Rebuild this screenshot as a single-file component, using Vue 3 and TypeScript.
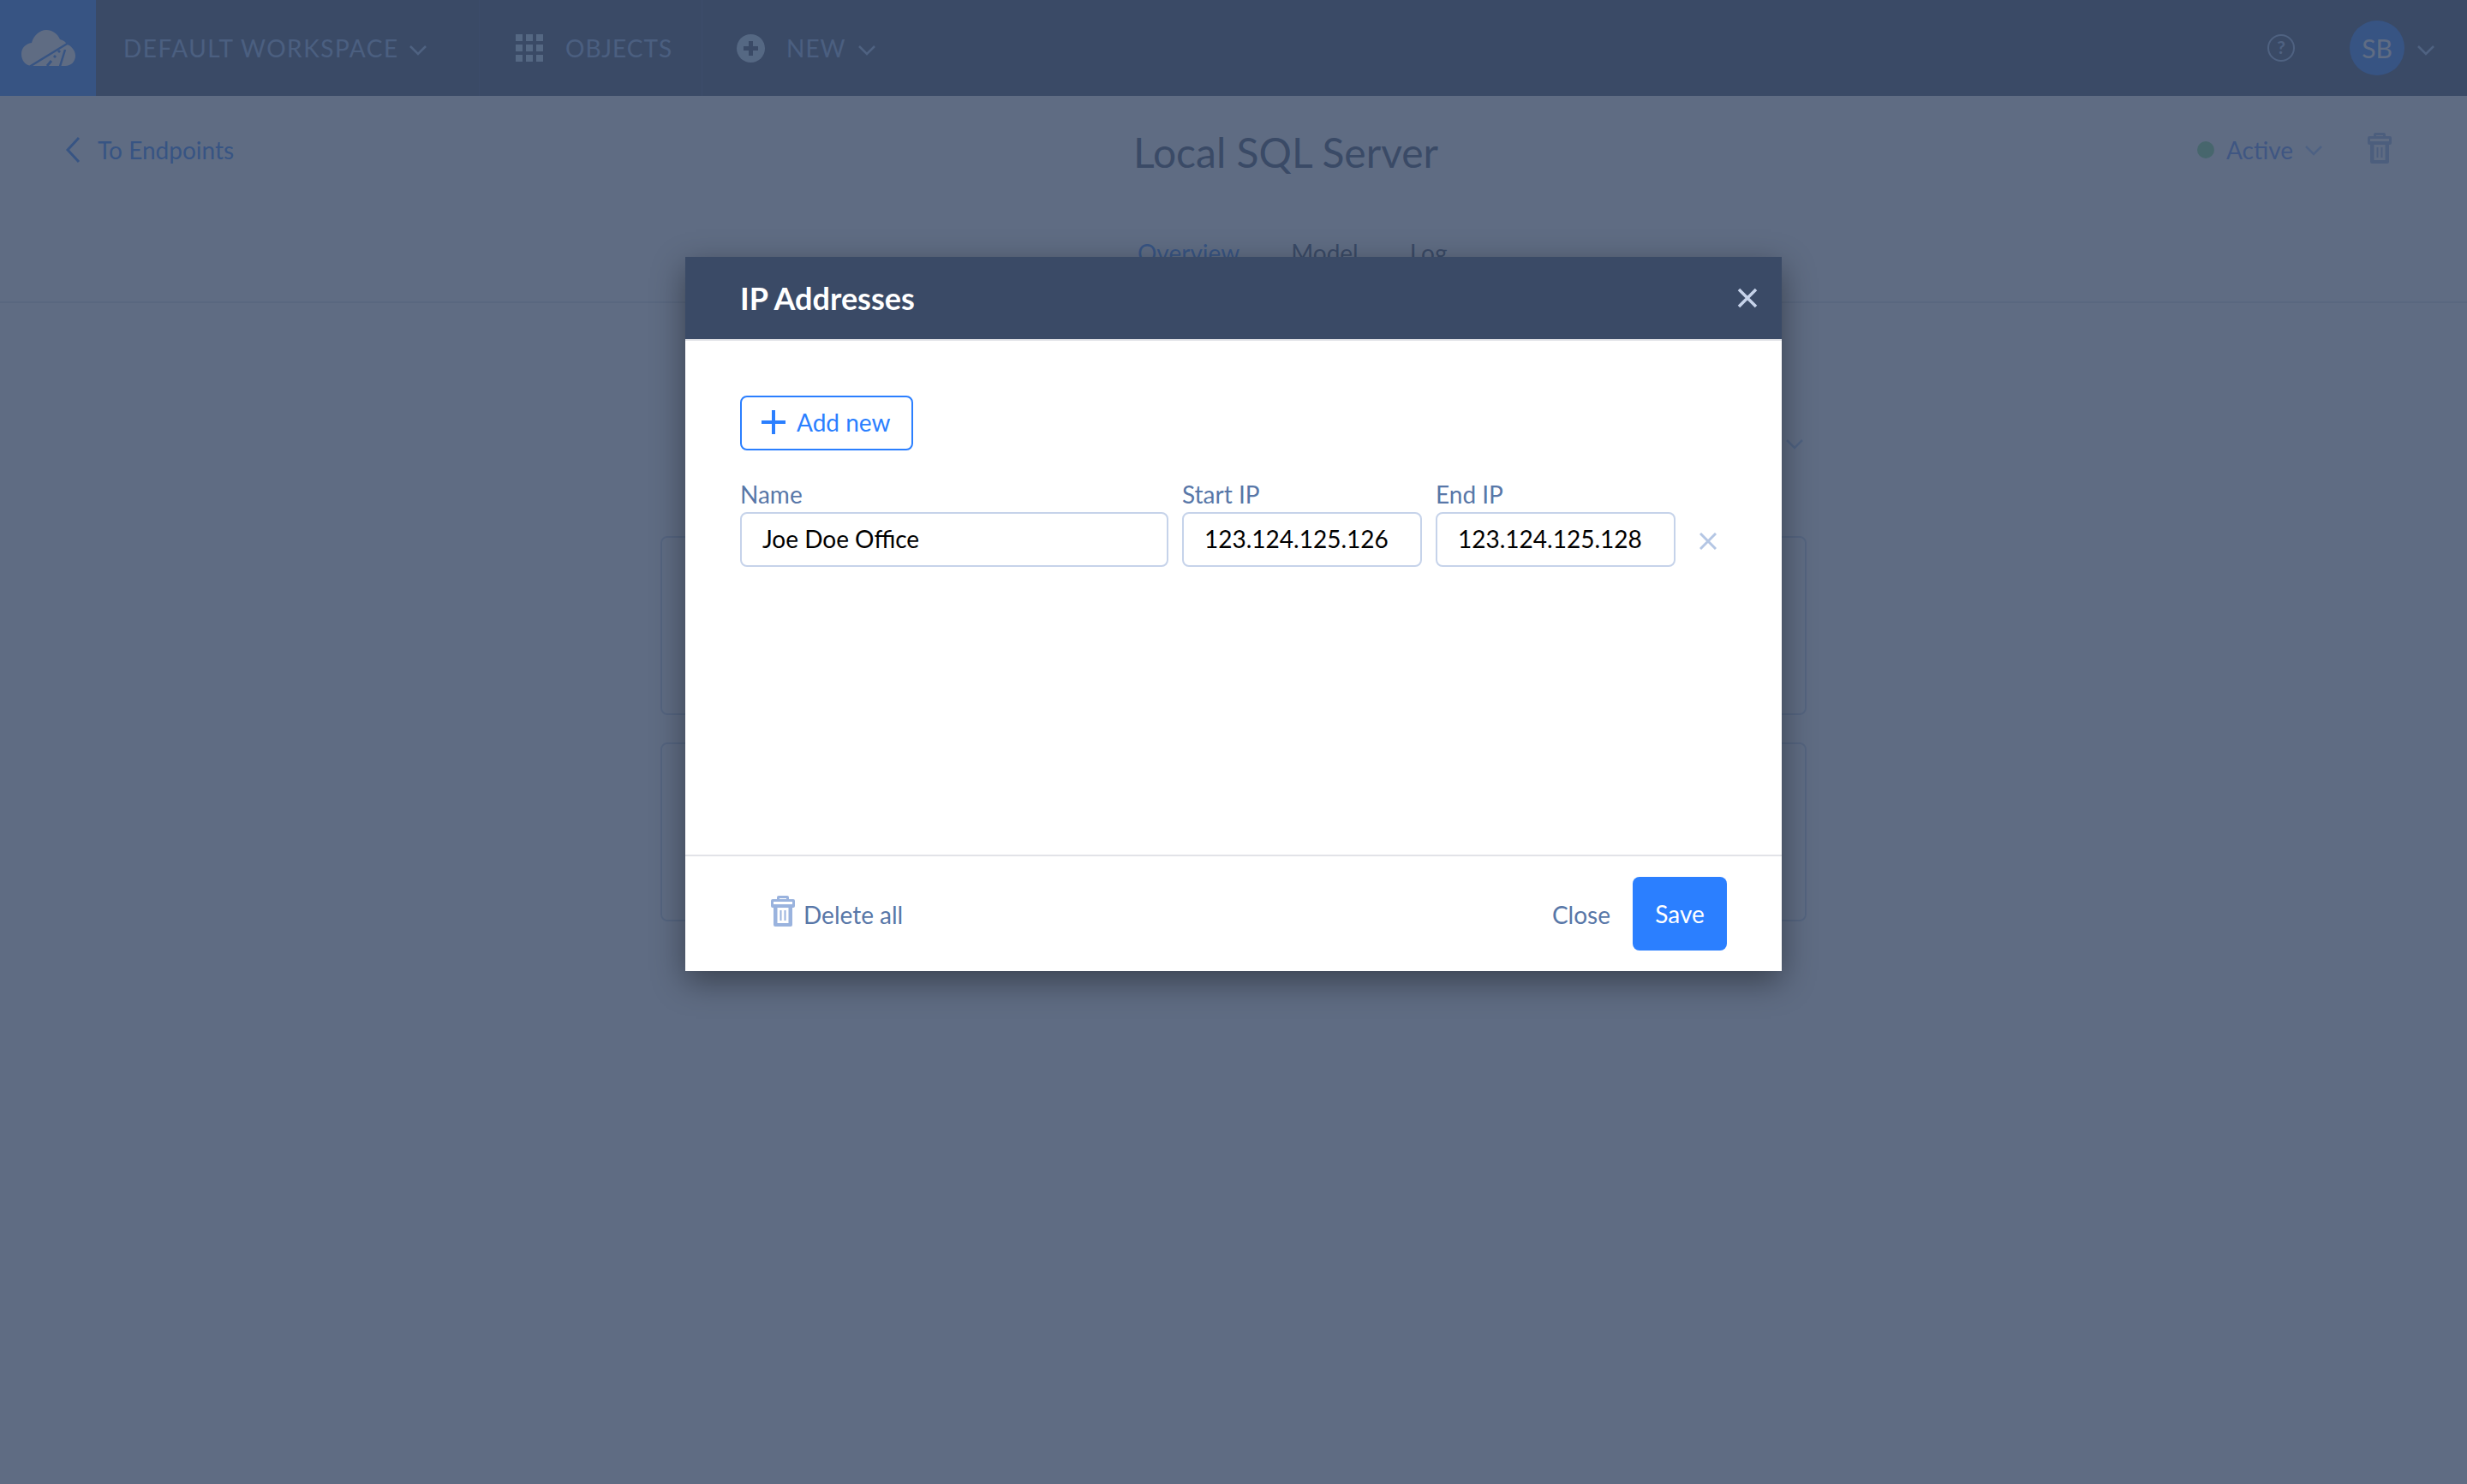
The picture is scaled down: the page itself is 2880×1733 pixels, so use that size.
<template>
  <div class="page">
    <header class="nav">
      <div class="logo">
        <svg width="64" height="42" viewBox="0 0 64 42">
          <path fill="#fff" d="M14 42C6 42 1 36 1 28C1 21 6 16 13 15C15 7 22 0 30 0C37 0 43 4 46 11C50 12 53 14 54 17C59 18 64 24 64 30C64 37 59 42 52 42Z" />
          <path stroke="#2b7fff" stroke-width="2.500" fill="none" d="M11 42.500L56 15M46 42.500L52 23" />
          <path stroke="#2b7fff" stroke-width="3" fill="none" d="M31 42L36 36M39 32L41 30M44 26L46 24" />
        </svg>
      </div>
      <div class="nav-item workspace">
        <span>Default Workspace</span>
        <svg class="chev" width="20" height="13" viewBox="0 0 20 13"><path d="M1 2l9 9 9-9" /></svg>
      </div>
      <div class="nav-item objects">
        <svg width="32" height="32" viewBox="0 0 32 32" class="grid-icon">
          <rect v-for="c in gridCells" :key="c.id" :x="c.x" :y="c.y" width="8" height="8" />
        </svg>
        <span>Objects</span>
      </div>
      <div class="nav-item create">
        <svg width="33" height="33" viewBox="0 0 33 33">
          <circle cx="16.500" cy="16.500" r="16.500" fill="#c9e6ff" />
          <path d="M16.500 8v17M8 16.500h17" stroke="#3a4a66" stroke-width="5" />
        </svg>
        <span>New</span>
        <svg class="chev" width="20" height="13" viewBox="0 0 20 13"><path d="M1 2l9 9 9-9" /></svg>
      </div>
      <div class="nav-right">
        <svg width="32" height="32" viewBox="0 0 32 32" class="help">
          <circle cx="16" cy="16" r="15" fill="none" stroke="#a8c8f5" stroke-width="2" />
          <text x="16" y="23" text-anchor="middle" font-size="21" font-weight="700" fill="#a8c8f5">?</text>
        </svg>
        <div class="avatar">SB</div>
        <svg class="chev" width="20" height="13" viewBox="0 0 20 13"><path d="M1 2l9 9 9-9" /></svg>
      </div>
    </header>

    <section class="subhead">
      <a class="back">
        <svg width="20" height="32" viewBox="0 0 20 32"><path d="M17 2L4 16l13 14" /></svg>
        To Endpoints
      </a>
      <h1 class="title">Local SQL Server</h1>
      <div class="status">
        <i class="dot"></i>
        <span>Active</span>
        <svg class="chev" width="20" height="13" viewBox="0 0 20 13"><path d="M1 2l9 9 9-9" /></svg>
        <svg class="trash-bg" width="28" height="36" viewBox="0 0 28 36">
          <use href="#trash" />
        </svg>
      </div>
    </section>

    <nav class="tabs">
      <span class="tab active">Overview</span>
      <span class="tab">Model</span>
      <span class="tab">Log</span>
    </nav>

    <main class="content">
      <svg class="chev content-chev" width="20" height="13" viewBox="0 0 20 13"><path d="M1 2l9 9 9-9" /></svg>
      <div class="card"></div>
      <div class="card"></div>
    </main>

    <div class="overlay">
      <div class="modal">
        <div class="modal-head">
          <h2>IP Addresses</h2>
          <svg class="close" width="24" height="24" viewBox="0 0 24 24"><path d="M2 2l20 20M22 2L2 22" /></svg>
        </div>

        <div class="modal-body">
          <button class="add-btn">
            <svg width="30" height="30" viewBox="0 0 30 30"><path d="M15 1v28M1 15h28" /></svg>
            Add new
          </button>
          <div v-for="row in rows" :key="row.name" class="ip-row">
            <label class="field name-field">
              <span>Name</span>
              <input :value="row.name" />
            </label>
            <label class="field ip-field">
              <span>Start IP</span>
              <input :value="row.start" />
            </label>
            <label class="field ip-field">
              <span>End IP</span>
              <input :value="row.end" />
            </label>
            <svg class="row-remove" width="20" height="20" viewBox="0 0 20 20"><path d="M1 1l18 18M19 1L1 19" /></svg>
          </div>
        </div>

        <div class="modal-foot">
          <a class="delete-all">
            <svg width="28" height="36" viewBox="0 0 28 36">
              <g id="trash">
                <path fill="#9ab3de" fill-rule="evenodd" d="M9 0h10a2 2 0 0 1 2 2v2h5a2 2 0 0 1 2 2v6a2 2 0 0 1-2 2h-1v20a2 2 0 0 1-2 2H5a2 2 0 0 1-2-2V14H2a2 2 0 0 1-2-2V6a2 2 0 0 1 2-2h5V2a2 2 0 0 1 2-2zM10 3v1h8V3zM3 7v3h22V7zM7.500 14v18h13V14zM10.500 17h2v12h-2zM15.500 17h2v12h-2z" />
              </g>
            </svg>
            Delete all
          </a>
          <a class="close-link">Close</a>
          <button class="save-btn">Save</button>
        </div>
      </div>
    </div>
  </div>
</template>

<script setup lang="ts">
const gridCells = [0, 1, 2].flatMap((r) =>
  [0, 1, 2].map((c) => ({ id: `${r}-${c}`, x: c * 12, y: r * 12 }))
)

const rows = [
  { name: 'Joe Doe Office', start: '123.124.125.126', end: '123.124.125.128' }
]
</script>

<style>
html,
body {
  margin: 0;
  background: #fff;
}
</style>

<style scoped>
.page {
  position: relative;
  min-height: 1733px;
  font-family: Lato, "Liberation Sans", sans-serif;
  font-size: 28px;
  color: #3a4a66;
  overflow: hidden;
}

.nav {
  display: flex;
  align-items: center;
  height: 112px;
  background: #3a4a66;
  color: #93b8ed;
}

.logo {
  display: flex;
  align-items: center;
  justify-content: center;
  width: 112px;
  height: 112px;
  background: #2b7fff;
}

.nav-item {
  display: flex;
  align-items: center;
  height: 100%;
  box-sizing: border-box;
  text-transform: uppercase;
  letter-spacing: 1.500px;
  border-right: 1px solid #46587a;
}

.workspace {
  width: 448px;
  padding-left: 32px;
  gap: 12px;
}

.objects {
  width: 260px;
  padding-left: 42px;
  gap: 26px;
  letter-spacing: 1px;
}

.create {
  padding-left: 40px;
  gap: 25px;
  border-right: 0;
  letter-spacing: 1px;
}

.create .chev {
  margin-left: -11px;
}

.grid-icon {
  fill: #c9e6ff;
}

.chev {
  fill: none;
  stroke: #a8c8f5;
  stroke-width: 2.500;
  flex: none;
}

.nav .chev {
  margin-top: 4px;
}

.nav-right {
  display: flex;
  align-items: center;
  margin-left: auto;
  padding-right: 38px;
}

.help text {
  font-family: Lato, sans-serif;
}

.avatar {
  width: 64px;
  height: 64px;
  margin-left: 64px;
  margin-right: 15px;
  border-radius: 50%;
  background: #2b7fff;
  color: #fff;
  font-size: 30px;
  line-height: 64px;
  text-align: center;
}

.subhead {
  display: grid;
  grid-template-columns: 1323px 1fr auto;
  align-items: center;
  height: 128px;
}

.back {
  display: flex;
  align-items: center;
  gap: 19px;
  padding-left: 75px;
  margin-top: -2px;
  color: #2b7fff;
}

.back svg {
  fill: none;
  stroke: #2b7fff;
  stroke-width: 3;
}

.title {
  margin: 4px 0 0;
  font-size: 48px;
  font-weight: 400;
  line-height: 1;
}

.status {
  display: flex;
  align-items: center;
  padding-right: 88px;
  margin-top: -2px;
  color: #5489f7;
}

.dot {
  width: 20px;
  height: 20px;
  margin-right: 14px;
  border-radius: 50%;
  background: #7fe08a;
}

.status .chev {
  margin-left: 14px;
  stroke: #9ec3ff;
}

.trash-bg {
  margin-left: 53px;
  margin-top: -4px;
}

.tabs {
  display: flex;
  gap: 60px;
  height: 114px;
  box-sizing: border-box;
  padding: 38px 0 0 1328px;
  border-bottom: 2px solid #e0e2e8;
}

.tab.active {
  color: #2b7fff;
}

.content {
  position: relative;
  display: flex;
  flex-direction: column;
  gap: 32px;
  width: 1338px;
  margin: 272px auto 0;
}

.content-chev {
  position: absolute;
  top: -114px;
  right: 4px;
}

.card {
  box-sizing: border-box;
  height: 209px;
  border: 2px solid #c6d3ea;
  border-radius: 8px;
}

.overlay {
  position: absolute;
  inset: 0;
  background: rgba(58, 74, 102, 0.81);
}

.modal {
  width: 1280px;
  margin: 300px auto 0;
  background: #fff;
  box-shadow: 0 12px 36px rgba(0, 0, 0, 0.4);
}

.modal-head {
  display: flex;
  align-items: center;
  justify-content: space-between;
  height: 96px;
  padding: 0 28px 0 64px;
  background: #3a4a66;
  border-bottom: 2px solid #e2e3e8;
}

.modal-head h2 {
  margin: 0;
  color: #fff;
  font-size: 36px;
  font-weight: 700;
}

.close {
  fill: none;
  stroke: #c6d3ea;
  stroke-width: 3.500;
}

.modal-body {
  height: 602px;
  box-sizing: border-box;
  padding: 64px 64px 0;
  border-bottom: 2px solid #e2e3e8;
}

.add-btn {
  display: flex;
  align-items: center;
  gap: 12px;
  width: 202px;
  height: 64px;
  padding: 0 0 3px 22px;
  border: 2px solid #2b7fff;
  border-radius: 8px;
  background: #fff;
  color: #2b7fff;
  font: inherit;
}

.add-btn svg {
  fill: none;
  stroke: #2b7fff;
  stroke-width: 4;
}

.ip-row {
  display: flex;
  align-items: flex-end;
  gap: 16px;
  margin-top: 34px;
}

.field {
  display: flex;
  flex-direction: column;
  gap: 4px;
  color: #5877a8;
}

.field span {
  line-height: 34px;
}

.field input {
  box-sizing: border-box;
  width: 100%;
  height: 64px;
  padding: 0 24px 2px;
  border: 2px solid #c6d3ea;
  border-radius: 8px;
  background: #fff;
  color: #000;
  font: inherit;
  outline: none;
}

.name-field {
  width: 500px;
}

.ip-field {
  width: 280px;
}

.row-remove {
  margin: 0 0 20px 12px;
  fill: none;
  stroke: #b4c6e4;
  stroke-width: 3;
}

.modal-foot {
  display: flex;
  align-items: center;
  padding: 24px 64px;
  color: #5877a8;
}

.delete-all {
  display: flex;
  align-items: center;
  gap: 10px;
  margin: 2px auto 0 36px;
}

.delete-all svg {
  margin-top: -8px;
}

.close-link {
  margin-top: 2px;
  margin-right: 26px;
}

.save-btn {
  width: 110px;
  height: 86px;
  border: 0;
  border-radius: 8px;
  background: #2b7fff;
  color: #fff;
  font: inherit;
}
</style>
